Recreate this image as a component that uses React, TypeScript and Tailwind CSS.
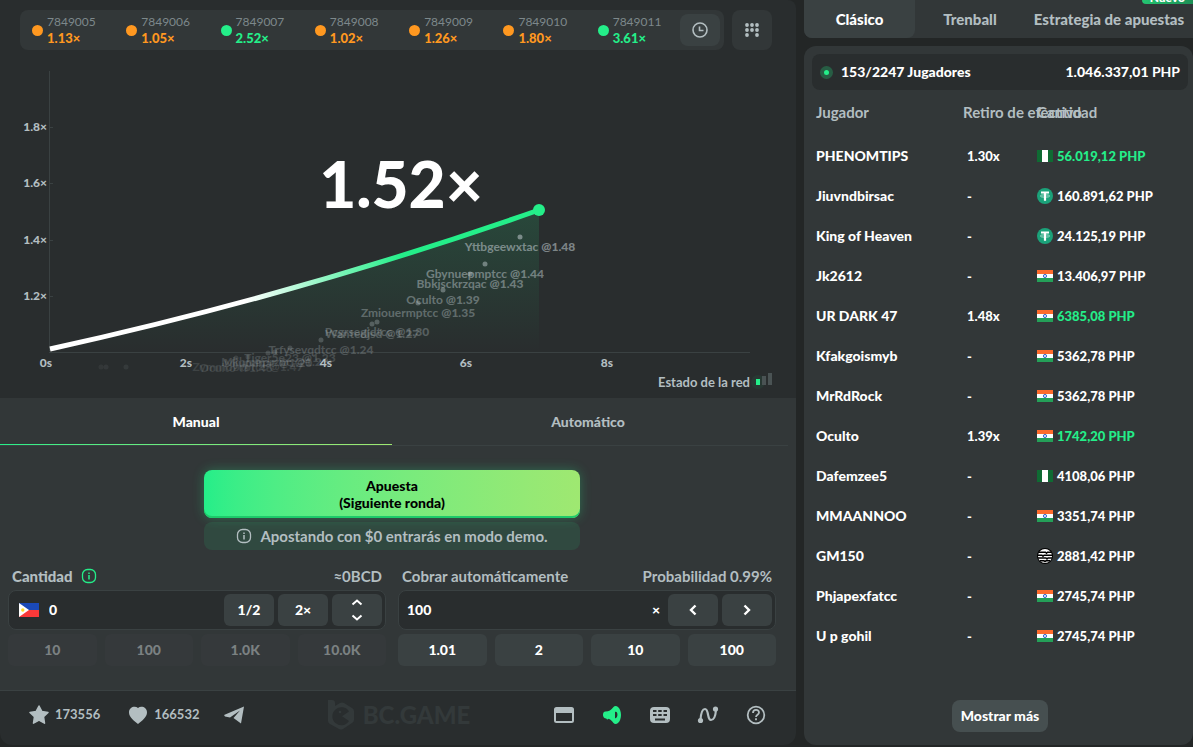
import { useState } from 'react';
import type { ReactNode } from 'react';
import clsx from 'clsx';

const history = [
    { id: '7849005', rate: '1.13×', win: false },
    { id: '7849006', rate: '1.05×', win: false },
    { id: '7849007', rate: '2.52×', win: true },
    { id: '7849008', rate: '1.02×', win: false },
    { id: '7849009', rate: '1.26×', win: false },
    { id: '7849010', rate: '1.80×', win: false },
    { id: '7849011', rate: '3.61×', win: true },
];

type Currency = 'ngn' | 'inr' | 'usdt' | 'apt';

interface Bet {
    name: string;
    cashout?: string;
    currency: Currency;
    amount: string;
}

const bets: Bet[] = [
    { name: 'PHENOMTIPS', cashout: '1.30x', currency: 'ngn', amount: '56.019,12 PHP' },
    { name: 'Jiuvndbirsac', currency: 'usdt', amount: '160.891,62 PHP' },
    { name: 'King of Heaven', currency: 'usdt', amount: '24.125,19 PHP' },
    { name: 'Jk2612', currency: 'inr', amount: '13.406,97 PHP' },
    { name: 'UR DARK 47', cashout: '1.48x', currency: 'inr', amount: '6385,08 PHP' },
    { name: 'Kfakgoismyb', currency: 'inr', amount: '5362,78 PHP' },
    { name: 'MrRdRock', currency: 'inr', amount: '5362,78 PHP' },
    { name: 'Oculto', cashout: '1.39x', currency: 'inr', amount: '1742,20 PHP' },
    { name: 'Dafemzee5', currency: 'ngn', amount: '4108,06 PHP' },
    { name: 'MMAANNOO', currency: 'inr', amount: '3351,74 PHP' },
    { name: 'GM150', currency: 'apt', amount: '2881,42 PHP' },
    { name: 'Phjapexfatcc', currency: 'inr', amount: '2745,74 PHP' },
    { name: 'U p gohil', currency: 'inr', amount: '2745,74 PHP' },
];

// x/y is the dot, the label hangs 10px under it
const escapes = [
    { x: 520, y: 237, name: 'Yttbgeewxtac', rate: '1.48', opacity: 0.6 },
    { x: 485, y: 264, name: 'Gbynuepmptcc', rate: '1.44', opacity: 0.53 },
    { x: 470, y: 274, name: 'Bbkjsckrzqac', rate: '1.43', opacity: 0.5 },
    { x: 443, y: 290, name: 'Oculto', rate: '1.39', opacity: 0.45 },
    { x: 418, y: 303, name: 'Zmiouermptcc', rate: '1.35', opacity: 0.4 },
    { x: 377, y: 322, name: 'Pcgrsegjdtcc', rate: '1.30', opacity: 0.33 },
    { x: 372, y: 324, name: 'Wantedjsd', rate: '1.27', opacity: 0.32 },
    { x: 321, y: 340, name: 'Trfysevqdtcc', rate: '1.24', opacity: 0.27 },
    { x: 290, y: 348, name: 'Tiger5e23', rate: '1.23', opacity: 0.22 },
    { x: 275, y: 352, name: 'Mkhmnprznc', rate: '1.23', opacity: 0.2 },
    { x: 268, y: 353, name: 'Mjupunar', rate: '1.20', opacity: 0.2 },
    { x: 248, y: 357, name: 'Zymmobrptcc', rate: '1.47', opacity: 0.15 },
    { x: 236, y: 358, name: 'Oculto', rate: '1.46', opacity: 0.15 },
    { x: 126, y: 367, name: 'Bdulmnkhdbl', rate: '1.08', opacity: 0.09 },
    { x: 106, y: 367, name: 'Sdxlmrdkl', rate: '1.06', opacity: 0.08 },
    { x: 101, y: 367, name: 'Hnkbhdr', rate: '1.05', opacity: 0.07 },
];

function InfoIcon({ className }: { className?: string }) {
    return (
        <svg viewBox="0 0 16 16" className={clsx('size-4', className)} fill="none" stroke="currentColor">
            <rect x="1.5" y="1.5" width="13" height="13" rx="5" strokeWidth="1.3" />
            <path d="M8 7v4.5M8 4.6v1.4" strokeWidth="1.5" />
        </svg>
    );
}

function CurrencyIcon({ type }: { type: Currency }) {
    if (type === 'ngn') {
        return (
            <svg viewBox="0 0 16 12" className="h-3 w-4">
                <path fill="#fff" d="M0 0h16v12H0z" />
                <path fill="#0f6b33" d="M0 0h5v12H0zM11 0h5v12h-5z" />
            </svg>
        );
    }
    if (type === 'inr') {
        return (
            <svg viewBox="0 0 16 12" className="h-3 w-4">
                <path fill="#fff" d="M0 0h16v12H0z" />
                <path fill="#ff6c2d" d="M0 0h16v4H0z" />
                <path fill="#249f58" d="M0 8h16v4H0z" />
                <circle cx="8" cy="6" r="1.6" fill="#dfe6fb" stroke="#2a56c6" strokeWidth="0.9" />
            </svg>
        );
    }
    if (type === 'usdt') {
        return (
            <svg viewBox="0 0 16 16" className="size-4">
                <circle cx="8" cy="8" r="8" fill="#1ba27a" />
                <path fill="#fff" d="M4 3.6h8v2H9.1v7.2H6.9V5.6H4z" />
                <ellipse cx="8" cy="8" rx="4.6" ry="1.2" fill="none" stroke="#fff" strokeWidth="0.6" />
            </svg>
        );
    }
    return (
        <svg viewBox="0 0 16 16" className="size-4">
            <circle cx="8" cy="8" r="8" fill="#000" />
            <circle cx="8" cy="8" r="7" fill="#fff" />
            <path
                d="M1.500 4.200h7l1 1 1-1h4M1 7.200h4l1 1 1-1h8M1 10h8l1 1 1-1h4M3 12.800h4l1 .8 1-.8h4"
                fill="none"
                stroke="#000"
                strokeWidth="1.500"
            />
        </svg>
    );
}

function CrashChart() {
    return (
        <svg viewBox="0 50 796 322" className="block w-full">
            <defs>
                <linearGradient id="curve" gradientUnits="userSpaceOnUse" x1="50" y1="0" x2="539" y2="0">
                    <stop offset="0.4" stopColor="#fff" />
                    <stop offset="0.72" stopColor="#24ee89" />
                </linearGradient>
                <linearGradient id="area" gradientUnits="userSpaceOnUse" x1="0" y1="210" x2="0" y2="352">
                    <stop offset="0" stopColor="#24ee89" stopOpacity="0.14" />
                    <stop offset="1" stopColor="#24ee89" stopOpacity="0" />
                </linearGradient>
            </defs>

            <g stroke="#3a4142" fill="none">
                <path d="M49.5 71v280M49 352.5h701" />
                <path d="M50 127.5h3M50 183.5h3M50 240.5h3M50 296.5h3" />
            </g>

            <g className="text-xs font-black" fill="#b3bec1" textAnchor="end">
                <text x="47" y="131">1.8×</text>
                <text x="47" y="187">1.6×</text>
                <text x="47" y="244">1.4×</text>
                <text x="47" y="300">1.2×</text>
            </g>

            <path d="M50 349Q300 294 539 210V352H50z" fill="url(#area)" />

            <g className="text-xs font-bold" textAnchor="middle" fill="#b3bec1">
                {escapes.map((e) => (
                    <g key={e.x} opacity={e.opacity}>
                        <circle cx={e.x} cy={e.y} r="2.5" />
                        <text x={e.x} y={e.y + 14}>
                            {e.name} <tspan className="font-black">@{e.rate}</tspan>
                        </text>
                    </g>
                ))}
            </g>

            <g className="text-xs font-black" fill="#b3bec1" textAnchor="middle">
                <text x="46" y="367">0s</text>
                <text x="186" y="367">2s</text>
                <text x="326" y="367">4s</text>
                <text x="466" y="367">6s</text>
                <text x="607" y="367">8s</text>
            </g>

            <path d="M50 349Q300 294 539 210" fill="none" stroke="url(#curve)" strokeWidth="5" />
            <circle cx="539" cy="210" r="6" fill="#24ee89" />
            <text x="401" y="208" textAnchor="middle" fill="#fff" className="text-[64px] font-black">
                1.52×
            </text>
        </svg>
    );
}

function SquareButton({ label, children }: { label?: string; children: ReactNode }) {
    return (
        <button
            aria-label={label}
            className="flex h-8 w-[50px] shrink-0 flex-col items-center justify-center rounded-md bg-[#3a4142] text-sm font-black text-white"
        >
            {children}
        </button>
    );
}

function Chips({ values, disabled }: { values: string[]; disabled?: boolean }) {
    return (
        <div className="mt-1 grid grid-cols-4 gap-2">
            {values.map((v) => (
                <button
                    key={v}
                    disabled={disabled}
                    className={clsx(
                        'h-8 rounded-md text-sm font-black',
                        disabled ? 'bg-[#35393b] text-[#7b8182]' : 'bg-[#3a4142] text-white'
                    )}
                >
                    {v}
                </button>
            ))}
        </div>
    );
}

function BetPanel() {
    const [amount, setAmount] = useState('0');
    const [target, setTarget] = useState('100');

    return (
        <section className="bg-[#323738] pb-6">
            <div className="mr-2 border-b border-[#3a4142] pr-1 text-sm font-black">
                <div className="flex h-[47px]">
                    <button className="relative flex-1 text-white">
                        Manual
                        <span className="absolute inset-x-0 bottom-0 h-px bg-linear-to-r from-[#24ee89] to-[#9fe871]" />
                    </button>
                    <button className="flex-1 text-[#b3bec1]">Automático</button>
                </div>
            </div>

            <div className="pr-5 pl-2">
                <div className="mx-auto mt-6 flex w-[376px] flex-col gap-1">
                    <button className="h-12 rounded-lg bg-linear-to-r from-[#24ee89] to-[#9fe871] text-sm leading-[17px] font-black text-black shadow-[0_0_12px_rgba(35,238,136,0.3),inset_0_-2px_0_#1dca6a]">
                        Apuesta
                        <br />
                        (Siguiente ronda)
                    </button>
                    <p className="flex h-7 items-center justify-center gap-2 rounded-lg bg-[#24ee89]/10 text-[15px] font-bold text-[#b3bec1]">
                        <InfoIcon />
                        Apostando con $0 entrarás en modo demo.
                    </p>
                </div>

                <div className="mt-4 grid grid-cols-2 gap-3">
                    <div>
                        <div className="mb-1 flex h-5 items-center gap-2 px-1 text-[15px] text-[#b3bec1]">
                            <label htmlFor="amount" className="font-black">
                                Cantidad
                            </label>
                            <InfoIcon className="text-[#24ee89]" />
                            <span className="ml-auto font-bold">≈0BCD</span>
                        </div>
                        <div className="flex h-10 items-center gap-1 rounded-lg border border-[#3a4142] bg-[#292d2e] pr-[3px] pl-2">
                            <svg viewBox="0 0 20 14" className="ml-0.5 h-3.5 w-5 shrink-0">
                                <path fill="#1a49b8" d="M0 0h20v7H0z" />
                                <path fill="#f93939" d="M0 7h20v7H0z" />
                                <path fill="#fff" d="M0 0l10 7-10 7z" />
                                <circle cx="3.8" cy="7" r="1.7" fill="#ffda2c" />
                            </svg>
                            <input
                                id="amount"
                                value={amount}
                                onChange={(e) => setAmount(e.target.value)}
                                className="ml-1.5 min-w-0 flex-1 bg-transparent text-sm font-black text-white outline-none"
                            />
                            <SquareButton>1/2</SquareButton>
                            <SquareButton>2×</SquareButton>
                            <SquareButton label="Ajustar">
                                <svg viewBox="0 0 12 24" className="h-6 w-3" fill="none" stroke="#fff" strokeWidth="2">
                                    <path d="M1.500 6.500L6 2.500l4.500 4M1.500 17.500l4.500 4 4.500-4" />
                                </svg>
                            </SquareButton>
                        </div>
                        <Chips values={['10', '100', '1.0K', '10.0K']} disabled />
                    </div>

                    <div>
                        <div className="mb-1 flex h-5 items-center justify-between px-1 text-[15px] font-bold text-[#b3bec1]">
                            <label htmlFor="target">Cobrar automáticamente</label>
                            <span>Probabilidad 0.99%</span>
                        </div>
                        <div className="flex h-10 items-center gap-1 rounded-lg border border-[#3a4142] bg-[#292d2e] pr-[3px] pl-2">
                            <input
                                id="target"
                                value={target}
                                onChange={(e) => setTarget(e.target.value)}
                                className="min-w-0 flex-1 bg-transparent text-sm font-black text-white outline-none"
                            />
                            <span className="mr-1 text-sm font-black text-white">×</span>
                            <SquareButton label="Menos">
                                <svg viewBox="0 0 8 12" className="h-3 w-2" fill="none" stroke="#fff" strokeWidth="2.400">
                                    <path d="M6.500 1.500L2 6l4.500 4.500" />
                                </svg>
                            </SquareButton>
                            <SquareButton label="Más">
                                <svg viewBox="0 0 8 12" className="h-3 w-2" fill="none" stroke="#fff" strokeWidth="2.400">
                                    <path d="M1.500 1.500L6 6l-4.500 4.500" />
                                </svg>
                            </SquareButton>
                        </div>
                        <Chips values={['1.01', '2', '10', '100']} />
                    </div>
                </div>
            </div>
        </section>
    );
}

function Footer() {
    return (
        <footer className="flex h-[55px] items-center rounded-b-xl border-t border-[#3a4142] bg-[#292d2e] pr-7 pb-1.5 pl-[29px] text-[13px] font-bold text-[#b3bec1]">
            <div className="flex flex-1 items-center">
                <button className="flex items-center gap-1.5">
                    <svg viewBox="0 0 20 20" className="size-5" fill="currentColor">
                        <path
                            d="M10 1l2.800 5.400 6.200 1-4.500 4.300 1 6.500L10 15.200l-5.500 3 1-6.500L1 7.400l6.200-1z"
                            stroke="currentColor"
                            strokeWidth="1.500"
                            strokeLinejoin="round"
                        />
                    </svg>
                    173556
                </button>
                <button className="ml-7 flex items-center gap-1.5">
                    <svg viewBox="0 0 20 20" className="size-5" fill="currentColor">
                        <path d="M10 19C6 16 1 12 1 7.500 1 2 7 .500 10 3c3-2.500 9-1 9 4.500 0 4.500-5 8.500-9 11.500z" />
                    </svg>
                    166532
                </button>
                <button aria-label="Telegram" className="ml-6">
                    <svg viewBox="0 0 20 18" className="h-[18px] w-5" fill="currentColor">
                        <path d="M20 .5L0 9l1 1.500 5 1L16 4.500 9.500 12l7.500 5.500z" />
                    </svg>
                </button>
            </div>

            <div className="flex items-center gap-2 text-2xl font-black text-[#33393a]">
                <svg viewBox="0 0 28 32" className="h-8 w-7" fill="currentColor">
                    <path d="M1 1h4a3 3 0 0 1 3 3v3l5-3q2-1 4 0l8 5q2 1 2 3v9q0 2-2 3l-9 6q-2 1-4 0l-9-5q-2-1-2-3z" />
                    <path fill="#292d2e" d="M22 12.500A9 9 0 1 0 22 22l-7-4.800z" />
                    <circle cx="13" cy="13" r="1.300" />
                </svg>
                BC.GAME
            </div>

            <div className="flex flex-1 justify-end gap-6">
                <button aria-label="Ventana">
                    <svg viewBox="0 0 24 24" className="size-6" fill="currentColor">
                        <path
                            fillRule="evenodd"
                            d="M4.500 4h15A2.500 2.500 0 0 1 22 6.500v11a2.500 2.500 0 0 1-2.500 2.500h-15A2.500 2.500 0 0 1 2 17.500v-11A2.500 2.500 0 0 1 4.500 4zM4 10v8h16v-8z"
                        />
                    </svg>
                </button>
                <button aria-label="Sonido" className="text-[#24ee89]">
                    <svg viewBox="0 0 24 24" className="size-6" fill="currentColor">
                        <path
                            fillRule="evenodd"
                            d="M5.500 8.500C9 8.500 11 7 13.500 4c1-1.200 3-1.200 4.500 0 4 3.500 4 12.500 0 16-1.500 1.200-3.500 1.200-4.500 0-2-2.500-3.500-4-5-4.200-.5 1-2 .7-2.200-.3C2 15.500 2 8.500 5.500 8.500zM15 9v6c3 1.500 3.500-7.500 0-6z"
                        />
                    </svg>
                </button>
                <button aria-label="Teclado">
                    <svg viewBox="0 0 24 24" className="size-6">
                        <rect x="2" y="4" width="20" height="16" rx="4" fill="currentColor" />
                        <path
                            d="M5 8h3.500M10.200 8h3.500M15.500 8h3.500M5 12h3.500M10.200 12h3.500M15.500 12h3.500M7 16.500h10"
                            stroke="#292d2e"
                            strokeWidth="2"
                        />
                    </svg>
                </button>
                <button aria-label="Tendencia">
                    <svg viewBox="0 0 24 24" className="size-6" fill="currentColor">
                        <path
                            d="M4.500 17C5 9 7 6 9 6c4 0 2 11 6 11 3 0 4.500-4 5-10"
                            fill="none"
                            stroke="currentColor"
                            strokeWidth="2.200"
                        />
                        <circle cx="4.500" cy="17.500" r="2.600" />
                        <circle cx="19.500" cy="6" r="2.600" />
                    </svg>
                </button>
                <button aria-label="Ayuda">
                    <svg viewBox="0 0 24 24" className="size-6" fill="none" stroke="currentColor" strokeWidth="1.800">
                        <circle cx="12" cy="12" r="8.300" />
                        <path d="M9 10c0-4 6-4 6-.500 0 2.200-3 2.200-3 4.500M12 15.200v2" />
                    </svg>
                </button>
            </div>
        </footer>
    );
}

function PlayersPanel() {
    return (
        <aside className="flex w-[389px] shrink-0 flex-col gap-2">
            <nav className="relative flex h-[38px] rounded-bl-lg bg-[#323738] text-[15px] font-black text-[#b3bec1]">
                <button className="w-[111px] rounded-b-lg bg-[#3a4142] text-white">Clásico</button>
                <button className="w-[110px]">Trenball</button>
                <button className="flex-1 whitespace-nowrap">Estrategia de apuestas</button>
                <span className="absolute -top-3 right-0 h-4 rounded-bl bg-linear-to-r from-[#24c572] to-[#1c8f55] px-2 text-xs leading-5 text-white">
                    Nuevo
                </span>
            </nav>

            <section className="flex flex-1 flex-col rounded-xl bg-[#323738] pt-2 pr-[5px] pb-[13px] pl-2">
                <div className="flex h-9 items-center rounded-lg bg-[#292d2e] px-2 text-sm font-black text-white">
                    <span className="mr-2 flex size-[13px] items-center justify-center rounded-full bg-[#24ee89]/25">
                        <span className="size-[5px] rounded-full bg-[#24ee89]" />
                    </span>
                    153/2247 Jugadores
                    <span className="ml-auto">
                        1.046.337,01 <span className="font-bold">PHP</span>
                    </span>
                </div>

                <table className="w-full table-fixed text-left text-sm whitespace-nowrap text-white">
                    <colgroup>
                        <col className="w-[151px]" />
                        <col className="w-[74px]" />
                        <col />
                    </colgroup>
                    <thead>
                        <tr className="h-[46px] text-[15px] text-[#b3bec1]">
                            <th className="pl-1 font-bold">Jugador</th>
                            <th className="font-bold">Retiro de efectivo</th>
                            <th className="font-bold">Cantidad</th>
                        </tr>
                    </thead>
                    <tbody className="font-black">
                        {bets.map((bet) => (
                            <tr key={bet.name} className="h-10">
                                <td className="pl-1">{bet.name}</td>
                                <td className="pl-1 text-[13px]">{bet.cashout ?? '-'}</td>
                                <td className="text-[13px]">
                                    <span className="flex items-center gap-1">
                                        <CurrencyIcon type={bet.currency} />
                                        <span className={clsx(bet.cashout && 'text-[#24ee89]')}>{bet.amount}</span>
                                    </span>
                                </td>
                            </tr>
                        ))}
                    </tbody>
                </table>

                <button className="mx-auto mt-auto h-8 w-24 rounded-lg bg-[#464f50] text-sm font-black text-white">
                    Mostrar más
                </button>
            </section>
        </aside>
    );
}

export default function App() {
    return (
        <div className="flex min-h-screen gap-2 bg-[#232626] pb-0.5 font-['Lato',sans-serif]">
            <div className="flex min-w-0 flex-1 flex-col">
                <section className="rounded-tr-lg bg-[#292d2e] pt-2.5">
                    <div className="flex gap-2 pr-6 pl-5">
                        <div className="flex h-10 flex-1 items-center rounded-lg bg-[#323738] pr-1">
                            <ul className="grid flex-1 grid-cols-7">
                                {history.map((h) => (
                                    <li
                                        key={h.id}
                                        className={clsx(
                                            'flex items-center gap-1 pl-3',
                                            h.win ? 'text-[#24ee89]' : 'text-[#ff9820]'
                                        )}
                                    >
                                        <span className="size-[11px] rounded-full bg-current" />
                                        <span className="text-[13px] leading-[17px] font-black">
                                            <span className="block text-xs leading-[17px] font-normal text-[#7d888b]">
                                                {h.id}
                                            </span>
                                            {h.rate}
                                        </span>
                                    </li>
                                ))}
                            </ul>
                            <button
                                aria-label="Historial"
                                className="flex h-8 w-10 items-center justify-center rounded-lg bg-[#3a4142]"
                            >
                                <svg viewBox="0 0 16 16" className="size-4" fill="none" stroke="#b3bec1" strokeWidth="1.600">
                                    <circle cx="8" cy="8" r="7" />
                                    <path d="M7.500 4.500v4h4" />
                                </svg>
                            </button>
                        </div>
                        <button
                            aria-label="Tendencias"
                            className="flex size-10 items-center justify-center rounded-lg bg-[#323738]"
                        >
                            <svg viewBox="0 0 14 14" className="size-3.5" fill="#b3bec1">
                                {[2, 7, 12].map((y) =>
                                    [2, 7, 12].map((x) =>
                                        x === 7 && y === 12 ? null : <circle key={`${x}-${y}`} cx={x} cy={y} r="1.900" />
                                    )
                                )}
                            </svg>
                        </button>
                    </div>

                    <CrashChart />

                    <div className="flex h-[26px] items-start justify-end gap-1.5 pr-6 text-[13px] leading-5 font-bold text-[#b3bec1]">
                        Estado de la red
                        <svg viewBox="0 0 16 12" className="mt-px h-3 w-4 overflow-visible">
                            <circle cx="2" cy="9" r="7" fill="#24ee89" opacity="0.06" />
                            <path fill="#24ee89" d="M0 6h4v6H0z" />
                            <path fill="#4a5354" d="M6 3h4v9H6zM12 0h4v12h-4z" />
                        </svg>
                    </div>
                </section>
                <BetPanel />
                <Footer />
            </div>
            <PlayersPanel />
        </div>
    );
}
